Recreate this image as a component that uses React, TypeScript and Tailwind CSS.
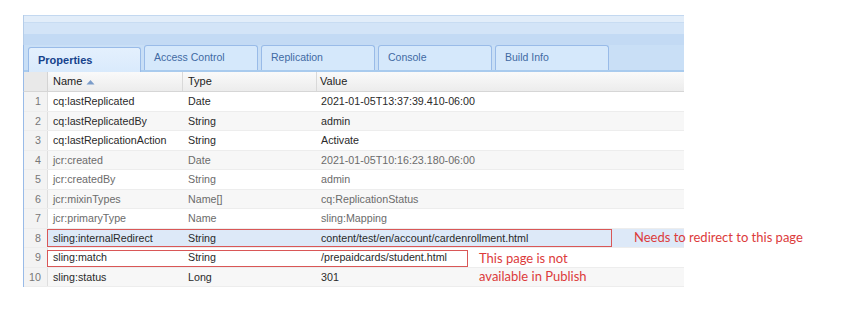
import React from "react";

type Row = { n: number; name: string; type: string; value: string; tone: "dark" | "gray" };

const rows: Row[] = [
  { n: 1, name: "cq:lastReplicated", type: "Date", value: "2021-01-05T13:37:39.410-06:00", tone: "dark" },
  { n: 2, name: "cq:lastReplicatedBy", type: "String", value: "admin", tone: "dark" },
  { n: 3, name: "cq:lastReplicationAction", type: "String", value: "Activate", tone: "dark" },
  { n: 4, name: "jcr:created", type: "Date", value: "2021-01-05T10:16:23.180-06:00", tone: "gray" },
  { n: 5, name: "jcr:createdBy", type: "String", value: "admin", tone: "gray" },
  { n: 6, name: "jcr:mixinTypes", type: "Name[]", value: "cq:ReplicationStatus", tone: "gray" },
  { n: 7, name: "jcr:primaryType", type: "Name", value: "sling:Mapping", tone: "gray" },
  { n: 8, name: "sling:internalRedirect", type: "String", value: "content/test/en/account/cardenrollment.html", tone: "dark" },
  { n: 9, name: "sling:match", type: "String", value: "/prepaidcards/student.html", tone: "dark" },
  { n: 10, name: "sling:status", type: "Long", value: "301", tone: "dark" },
];

const tabs = ["Properties", "Access Control", "Replication", "Console", "Build Info"];

export default function App() {
  return (
    <div
      className="relative w-[844px] h-[309px] bg-white overflow-hidden"
      style={{ fontFamily: '"Liberation Sans", Arial, sans-serif' }}
    >
      <div className="ml-[23px] pt-[15px] w-[661px]">
        {/* top bands */}
        <div className="h-[30px] border-l border-[#b5cde9] bg-[#d7e6f8] flex flex-col">
          <div className="h-[1px] bg-[#c3d8f0]" />
          <div className="h-[6px] bg-[#e2edf9]" />
          <div className="h-[1px] bg-[#c8dcf2]" />
          <div className="h-[11px] bg-[#d3e4f7]" />
          <div className="h-[11px] bg-[#c3daf4]" />
        </div>
        {/* tab strip */}
        <div className="h-[27px] bg-[#c9dff6] border-l border-[#99bbe8] flex items-end pl-[4px] gap-[3px] relative">
          <div className="absolute left-0 right-0 bottom-0 h-[2px] bg-[#a9cbee]" />
          {tabs.map((t, i) => (
            <div
              key={t}
              className={
                i === 0
                  ? "relative z-10 w-[113px] h-[25px] rounded-t-[3px] border border-b-0 border-[#99bbe8] bg-gradient-to-b from-[#e4f0fd] to-[#d9eafc] flex items-center pl-[9px] text-[11px] font-bold text-[#15428b]"
                  : "relative w-[114px] h-[25px] mb-[2px] rounded-t-[3px] border border-b-0 border-[#99bbe8] bg-[#d5e8fb] flex items-center pl-[9px] text-[10.5px] text-[#416aa3]"
              }
            >
              {t}
            </div>
          ))}
        </div>
        {/* header */}
        <div className="h-[20px] flex text-[11px] text-[#222] bg-gradient-to-b from-[#fafafa] to-[#ececec] border-b border-[#d6d6d6] border-l border-l-[#99bbe8]">
          <div className="w-[24px] bg-[#e9e9e9] border-r border-[#d3d3d3]" />
          <div className="w-[135px] border-r border-[#d9d9d9] pl-[5px] flex items-center">
            Name
            <svg width="9" height="6" viewBox="0 0 9 6" className="ml-[4px]">
              <path d="M0.5 5.5 L4.5 1 L8.5 5.5 Z" fill="#7b9cc9" />
            </svg>
          </div>
          <div className="w-[134px] border-r border-[#d9d9d9] pl-[5px] flex items-center">Type</div>
          <div className="flex-1 pl-[3px] flex items-center">Value</div>
        </div>
        {/* rows */}
        <div className="border-l border-[#99bbe8]">
          {rows.map((r) => {
            const bg = r.n === 8 ? "bg-[#dde9f8]" : r.n % 2 === 0 ? "bg-[#f7f7f7]" : "bg-white";
            const txt = r.tone === "gray" ? "text-[#6b6b6b]" : "text-[#2a2a2a]";
            return (
              <div
                key={r.n}
                className={`relative h-[19.5px] flex items-center text-[10.7px] border-b border-[#ededed] ${bg} ${txt}`}
              >
                <div className="w-[24px] h-full bg-[#f3f3f3] border-r border-[#dedede] flex items-center justify-end pr-[6px] text-[#777]">
                  {r.n}
                </div>
                <div className="w-[135px] pl-[5px] whitespace-nowrap">{r.name}</div>
                <div className="w-[134px] pl-[5px]">{r.type}</div>
                <div className="flex-1 pl-[4px] whitespace-nowrap">{r.value}</div>
                {r.n === 8 && (
                  <div className="absolute left-[23px] top-0 w-[565px] h-[18px] border border-[#d95757]" />
                )}
                {r.n === 9 && (
                  <div className="absolute left-[23px] top-[2px] w-[421px] h-[17px] border border-[#d95757]" />
                )}
              </div>
            );
          })}
        </div>
      </div>
      {/* annotations */}
      <div
        className="absolute left-[634px] top-[228px] text-[13px] text-[#dc3b3b] whitespace-nowrap"
        style={{ fontFamily: 'Lato, "Open Sans", sans-serif' }}
      >
        Needs to redirect to this page
      </div>
      <div
        className="absolute left-[479px] top-[249px] text-[13px] leading-[18px] text-[#dc3b3b]"
        style={{ fontFamily: 'Lato, "Open Sans", sans-serif' }}
      >
        This page is not
        <br />
        available in Publish
      </div>
    </div>
  );
}
